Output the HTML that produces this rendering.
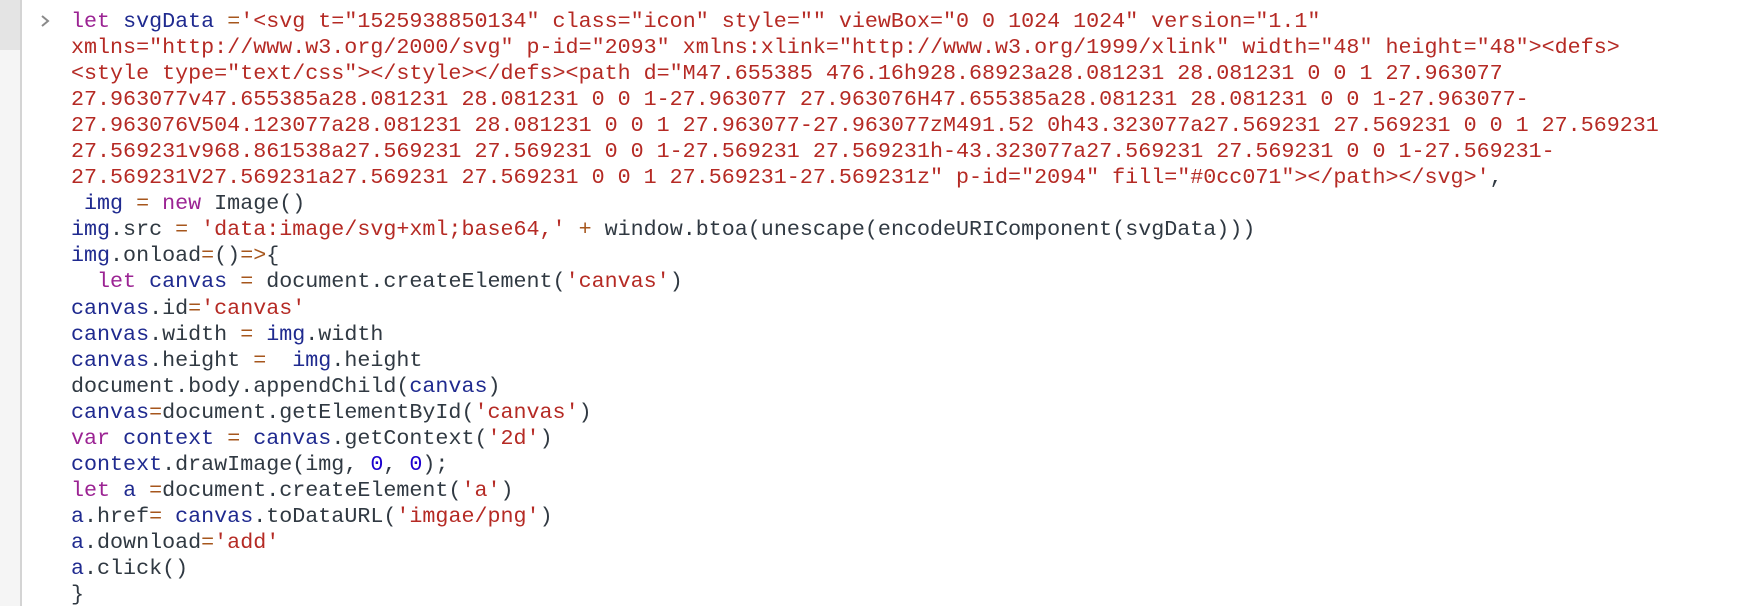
<!DOCTYPE html>
<html><head><meta charset="utf-8"><style>
html,body{margin:0;padding:0;background:#fff;width:1754px;height:606px;overflow:hidden;}
.gut{position:absolute;left:0;top:0;width:20px;height:606px;background:#f5f5f5;border-right:2px solid #d4d4d4;}
.gtop{position:absolute;left:0;top:0;width:20px;height:50px;background:#e4e4e4;}
.arrow{position:absolute;left:40px;top:14px;width:11px;height:14px;}
pre{position:absolute;left:71px;top:9px;margin:0;font-family:"Liberation Mono","DejaVu Sans Mono",monospace;font-size:21.7px;line-height:26.05px;color:#303942;white-space:pre;}
.k{color:#9b2393}.v{color:#1f2a8f}.s{color:#b52a24}.o{color:#a6561c}.n{color:#1c00cf}
</style></head><body>
<div class="gut"></div><div class="gtop"></div>
<svg class="arrow" viewBox="0 0 11 14"><path d="M2 2 L8 7 L2 12" fill="none" stroke="#8a8a8a" stroke-width="2"/></svg>
<pre><span class="k">let</span> <span class="v">svgData</span> <span class="o">=</span><span class="s">'&lt;svg t="1525938850134" class="icon" style="" viewBox="0 0 1024 1024" version="1.1"
xmlns="http://www.w3.org/2000/svg" p-id="2093" xmlns:xlink="http://www.w3.org/1999/xlink" width="48" height="48"&gt;&lt;defs&gt;
&lt;style type="text/css"&gt;&lt;/style&gt;&lt;/defs&gt;&lt;path d="M47.655385 476.16h928.68923a28.081231 28.081231 0 0 1 27.963077
27.963077v47.655385a28.081231 28.081231 0 0 1-27.963077 27.963076H47.655385a28.081231 28.081231 0 0 1-27.963077-
27.963076V504.123077a28.081231 28.081231 0 0 1 27.963077-27.963077zM491.52 0h43.323077a27.569231 27.569231 0 0 1 27.569231
27.569231v968.861538a27.569231 27.569231 0 0 1-27.569231 27.569231h-43.323077a27.569231 27.569231 0 0 1-27.569231-
27.569231V27.569231a27.569231 27.569231 0 0 1 27.569231-27.569231z" p-id="2094" fill="#0cc071"&gt;&lt;/path&gt;&lt;/svg&gt;'</span>,
 <span class="v">img</span> <span class="o">=</span> <span class="k">new</span> Image()
<span class="v">img</span>.src <span class="o">=</span> <span class="s">'data:image/svg+xml;base64,'</span> <span class="o">+</span> window.btoa(unescape(encodeURIComponent(svgData)))
<span class="v">img</span>.onload<span class="o">=</span>()<span class="o">=&gt;</span>{
  <span class="k">let</span> <span class="v">canvas</span> <span class="o">=</span> document.createElement(<span class="s">'canvas'</span>)
<span class="v">canvas</span>.id<span class="o">=</span><span class="s">'canvas'</span>
<span class="v">canvas</span>.width <span class="o">=</span> <span class="v">img</span>.width
<span class="v">canvas</span>.height <span class="o">=</span>  <span class="v">img</span>.height
document.body.appendChild(<span class="v">canvas</span>)
<span class="v">canvas</span><span class="o">=</span>document.getElementById(<span class="s">'canvas'</span>)
<span class="k">var</span> <span class="v">context</span> <span class="o">=</span> <span class="v">canvas</span>.getContext(<span class="s">'2d'</span>)
<span class="v">context</span>.drawImage(img, <span class="n">0</span>, <span class="n">0</span>);
<span class="k">let</span> <span class="v">a</span> <span class="o">=</span>document.createElement(<span class="s">'a'</span>)
<span class="v">a</span>.href<span class="o">=</span> <span class="v">canvas</span>.toDataURL(<span class="s">'imgae/png'</span>)
<span class="v">a</span>.download<span class="o">=</span><span class="s">'add'</span>
<span class="v">a</span>.click()
}</pre>
</body></html>
